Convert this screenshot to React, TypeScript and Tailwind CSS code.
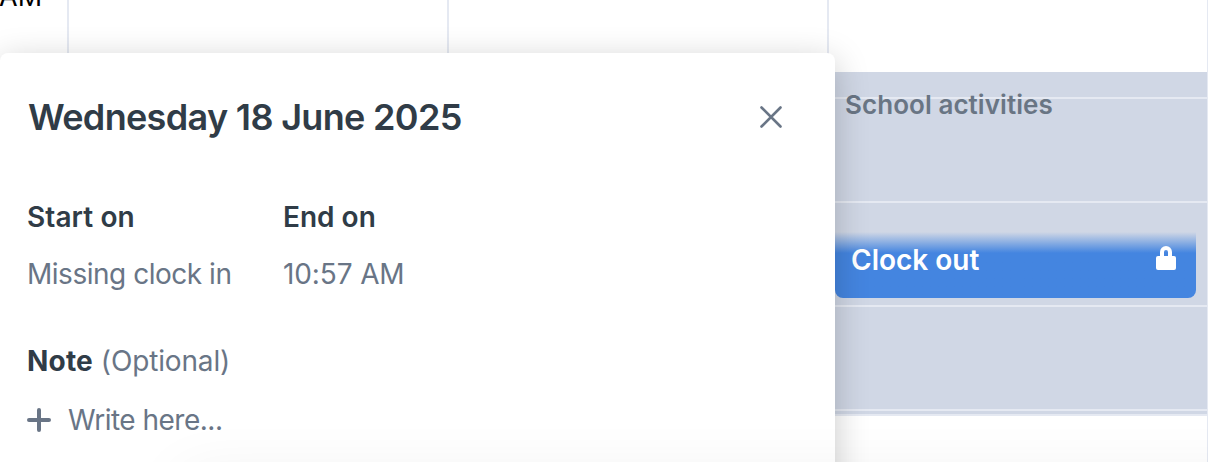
import React from "react";

const hourRows = ["h-[27px]", "h-[104px]", "h-[104px]", "h-[104px]"];

function LockIcon() {
  return (
    <svg width="20" height="24" viewBox="0 0 20 24" fill="none">
      <rect x="0" y="10" width="20" height="14" rx="2" fill="white" />
      <path
        d="M6 11.5V6a4 4 0 0 1 8 0v5.5"
        stroke="white"
        strokeWidth="4"
      />
    </svg>
  );
}

function Calendar() {
  return (
    <div className="grid h-full w-[1210px] grid-cols-[67px_380px_380px_380px_3px]">
      <div className="-mt-[20px] -ml-px text-[27px] leading-[34px] text-black whitespace-nowrap">
        AM
      </div>
      <div className="border-l-2 border-[#e5e9f2]" />
      <div className="border-l-2 border-[#e5e9f2]" />
      <div className="border-l-2 border-[#e5e9f2] pt-[72px]">
        <div className="relative h-[344px] border-b-2 border-[#e5e9f2] bg-[#d0d7e5]">
          {hourRows.map((height, i) => (
            <div key={i} className={`${height} border-b-2 border-[#e5e9f2]`} />
          ))}
          <p className="absolute left-4 top-4 text-[26px] leading-[34px] font-semibold tracking-[0.06px] text-[#697584] whitespace-nowrap">
            School activities
          </p>
          <div className="absolute left-[6px] right-[11px] top-[160px] flex h-[66px] items-start justify-between rounded-b-lg bg-linear-to-b from-[#4485e0]/0 to-[#4485e0] to-[21px] pt-[11px] pr-5 pl-4 text-white">
            <span className="text-[28px] leading-[34px] font-semibold">
              Clock out
            </span>
            <span className="pt-[3px]">
              <LockIcon />
            </span>
          </div>
        </div>
      </div>
      <div className="border-l border-[#e5e9f2]" />
    </div>
  );
}

function ShiftDialog() {
  return (
    <div className="absolute top-[53px] left-0 h-[520px] w-[835px] rounded-lg bg-white pr-7 pl-[27px] pt-[42px] text-[28px] leading-[34px] text-[#697586] shadow-[0_8px_34px_rgba(0,0,0,0.22)]">
      <div className="flex items-center justify-between pr-[25px]">
        <h2 className="pl-px text-[36px] leading-[44px] font-semibold tracking-[-0.67px] text-[#303c47]">
          Wednesday 18 June 2025
        </h2>
        <button aria-label="Close">
          <svg
            width="22"
            height="22"
            viewBox="0 0 22 22"
            stroke="currentColor"
            strokeWidth="2.6"
            strokeLinecap="round"
          >
            <path d="M1.5 1.5l19 19M20.5 1.5l-19 19" />
          </svg>
        </button>
      </div>
      <div className="mt-[61px] grid grid-cols-[256px_1fr] gap-y-[23px]">
        <span className="font-semibold tracking-[0.1px] text-[#303c47]">Start on</span>
        <span className="font-semibold text-[#303c47]">End on</span>
        <span className="tracking-[-0.48px]">Missing clock in</span>
        <span className="tracking-[-0.12px]">10:57 AM</span>
      </div>
      <p className="mt-[53px]">
        <span className="font-bold tracking-[0.2px] text-[#303c47]">Note</span>{" "}
        <span className="tracking-[-0.15px]">(Optional)</span>
      </p>
      <div className="mt-[25px] flex items-center">
        <svg
          width="24"
          height="24"
          viewBox="0 0 24 24"
          stroke="currentColor"
          strokeWidth="4"
          strokeLinecap="round"
        >
          <path d="M12 2v20M2 12h20" />
        </svg>
        <span className="ml-[17px] tracking-[-0.5px]">Write here...</span>
      </div>
    </div>
  );
}

export default function App() {
  return (
    <div className="relative h-[462px] w-[1208px] overflow-hidden bg-white font-['Inter',sans-serif]">
      <Calendar />
      <ShiftDialog />
      {/* shadow cast by the footer bar below the fold */}
      <div className="pointer-events-none absolute top-[472px] left-[180px] h-[60px] w-[1200px] shadow-[0_0_60px_rgba(0,0,0,0.06)]" />
    </div>
  );
}
